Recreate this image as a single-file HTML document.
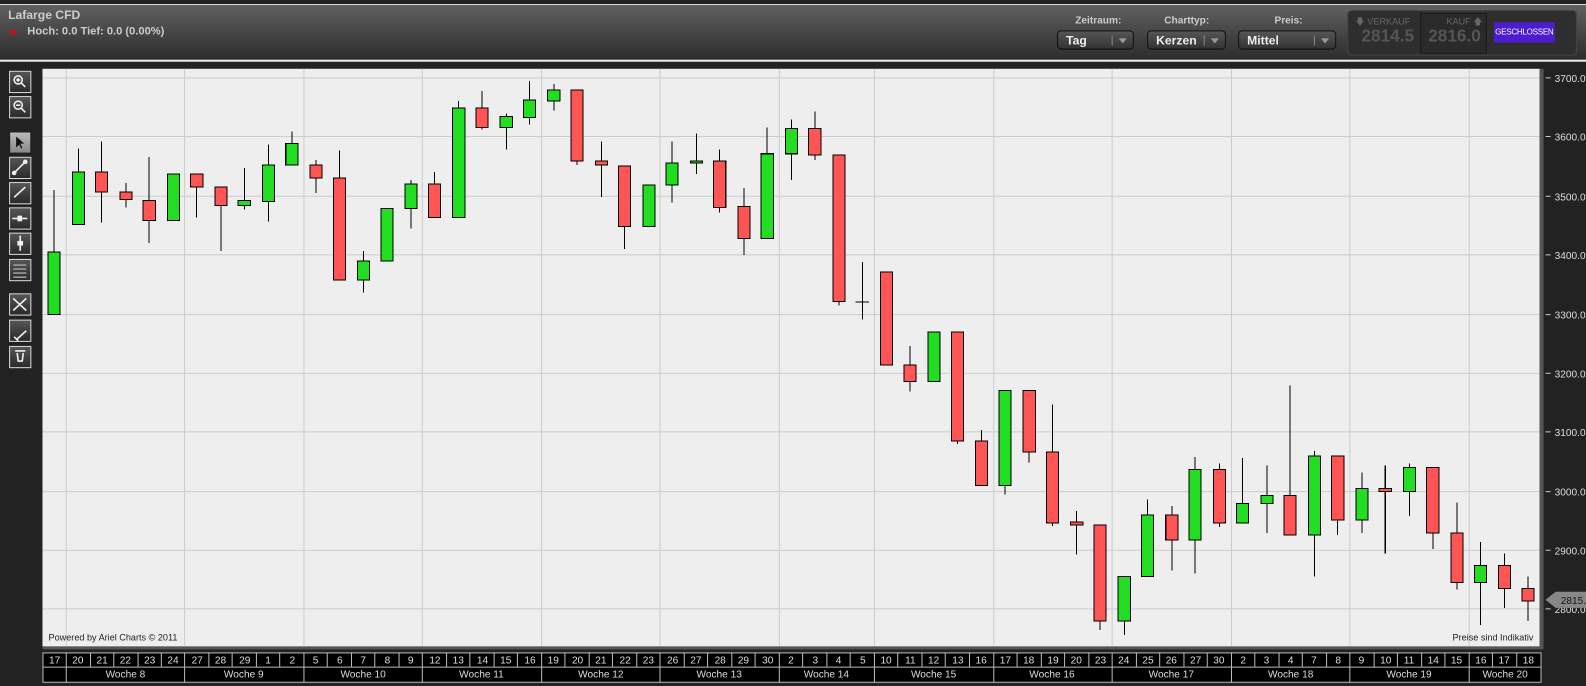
<!DOCTYPE html>
<html><head><meta charset="utf-8"><style>
body{margin:0;width:1586px;height:686px;background:#222;overflow:hidden;font-family:"Liberation Sans",sans-serif;position:relative}
#w{position:absolute;left:0;top:0;width:1568px;height:678px;transform:scale(1.0115);transform-origin:0 0}
.hdr{position:absolute;left:0;top:4px;width:1568px;height:54px;background:linear-gradient(#606060,#2c2c2c);border-top:1px solid #ddd;border-bottom:2px solid #eee}
.t{position:absolute;color:#ccc;font-weight:bold;font-size:12px}
.sel{position:absolute;top:25px;height:19px;border:1px solid #111;border-radius:4px;background:linear-gradient(#555,#333);color:#eee;font-weight:bold;font-size:12px;line-height:18px;padding-left:8px;box-sizing:border-box}
.sel:after{content:"";position:absolute;right:20px;top:4px;height:10px;border-left:1px solid #888}
.sel i{position:absolute;right:6px;top:7px;border-left:4px solid transparent;border-right:4px solid transparent;border-top:5px solid #999}
.btn{position:absolute;left:9px;width:20px;height:20px;border:1px solid #ddd;background:linear-gradient(#555,#2a2a2a)}
</style></head><body><div id="w">
<div class="hdr">
<div class="t" style="left:8px;top:3px">Lafarge CFD</div>
<div style="position:absolute;left:9px;top:25px;border-left:4px solid transparent;border-right:4px solid transparent;border-top:5px solid #e00"></div>
<div class="t" style="left:27px;top:20px;font-size:11px">Hoch: 0.0 Tief: 0.0 (0.00%)</div>
<div class="t" style="left:1063px;top:10px;font-size:10px">Zeitraum:</div>
<div class="t" style="left:1151px;top:10px;font-size:10px">Charttyp:</div>
<div class="t" style="left:1260px;top:10px;font-size:10px">Preis:</div>
<div class="sel" style="left:1045px;width:76px">Tag<i></i></div>
<div class="sel" style="left:1134px;width:78px">Kerzen<i></i></div>
<div class="sel" style="left:1224px;width:97px">Mittel<i></i></div>
<div style="position:absolute;left:1332px;top:5px;width:225px;height:43px;border:1px solid #444;border-radius:4px;background:#2e2e2e"></div>
<div style="position:absolute;left:1404px;top:8px;width:64px;height:38px;border:1px solid #1a1a1a;background:#2a2a2a"></div>
<div style="position:absolute;left:1340px;top:9px;color:#666;font-size:9px">&#x1F847; VERKAUF</div>
<div style="position:absolute;left:1430px;top:9px;color:#666;font-size:9px">KAUF &#x1F845;</div>
<div style="position:absolute;left:1346px;top:21px;color:#555;font-size:17px;font-weight:bold">2814.5</div>
<div style="position:absolute;left:1412px;top:21px;color:#555;font-size:17px;font-weight:bold">2816.0</div>
<div style="position:absolute;left:1477px;top:17px;width:60px;height:20px;background:#4c1dd0;color:#fff;font-size:8px;line-height:20px;text-align:center;letter-spacing:-0.3px;white-space:nowrap;overflow:hidden">GESCHLOSSEN</div>
</div>
<div class="btn" style="top:70px"></div><div class="btn" style="top:95px"></div>
<div class="btn" style="top:130px;background:linear-gradient(#bbb,#888);border-color:#222"></div>
<div class="btn" style="top:155px"></div><div class="btn" style="top:180px"></div><div class="btn" style="top:205px"></div><div class="btn" style="top:230px"></div><div class="btn" style="top:256px"></div>
<div class="btn" style="top:290px"></div><div class="btn" style="top:316px"></div><div class="btn" style="top:342px"></div>
<svg width="1568" height="678" style="position:absolute;left:0;top:0" font-family="Liberation Sans, sans-serif">
<g stroke="#eee" stroke-width="1.6" fill="none">
<circle cx="18" cy="79" r="4"/><line x1="21" y1="82" x2="25" y2="86"/><path d="M16 79h4M18 77v4"/>
<circle cx="18" cy="104" r="4"/><line x1="21" y1="107" x2="25" y2="111"/><path d="M16 104h4"/>
<line x1="14" y1="171" x2="25" y2="160"/><circle cx="14" cy="171" r="1.5" fill="#eee"/><circle cx="25" cy="160" r="1.5" fill="#eee"/>
<line x1="14" y1="195" x2="25" y2="185"/>
<line x1="12" y1="216" x2="27" y2="216"/><rect x="18" y="214" width="3" height="4" fill="#eee"/>
<line x1="20" y1="233" x2="20" y2="248"/><rect x="18" y="239" width="4" height="3" fill="#eee"/>
<path d="M13 262h13M13 266h13M13 270h13M13 274h13" stroke="#999"/>
<path d="M13 307l13-12M13 295l13 12M16 336l10-9M14 333l4 4"/>
<path d="M15 347h10M17 349l1 8h4l1-8"/>
</g>
<path d="M16 135v11l3-3 2 4 1-1-2-4h4z" fill="#111"/>
<rect x="42" y="68" width="1480" height="572" fill="#eee"/>
<rect x="1522" y="68" width="4" height="572" fill="#555"/>
<rect x="42" y="639" width="1484" height="3" fill="#555"/>
<g stroke="#ccc" stroke-width="1">
<path d="M42 77H1522M42 135H1522M42 194H1522M42 252H1522M42 311H1522M42 369H1522M42 427H1522M42 486H1522M42 544H1522M42 602H1522"/>
<path d="M65.5 68V639M182.5 68V639M300.5 68V639M417.5 68V639M535.5 68V639M652.5 68V639M770.5 68V639M864.5 68V639M982.5 68V639M1099.5 68V639M1217.5 68V639M1334.5 68V639M1452.5 68V639"/>
</g>
<g stroke="#ccc"><path d="M1528 77h5M1528 135h5M1528 194h5M1528 252h5M1528 311h5M1528 369h5M1528 427h5M1528 486h5M1528 544h5M1528 602h5"/></g>
<g fill="#ddd" font-size="10">
<text x="1537" y="81">3700.0</text><text x="1537" y="139">3600.0</text><text x="1537" y="198">3500.0</text><text x="1537" y="256">3400.0</text><text x="1537" y="315">3300.0</text><text x="1537" y="373">3200.0</text><text x="1537" y="431">3100.0</text><text x="1537" y="490">3000.0</text><text x="1537" y="548">2900.0</text><text x="1537" y="606">2800.0</text>
</g>
<path d="M1528 593l10-8h30v16h-30z" fill="#888"/><text x="1543" y="597" font-size="10" fill="#111">2815.</text>
<text x="48" y="633" font-size="9" fill="#222">Powered by Ariel Charts © 2011</text>
<text x="1516" y="633" font-size="9" fill="#222" text-anchor="end">Preise sind Indikativ</text>
<g stroke="#000" stroke-width="1" shape-rendering="crispEdges">
<line x1="53.5" y1="188" x2="53.5" y2="311"/><rect x="47.5" y="249" width="12" height="62" fill="#22dd22"/>
<line x1="77.5" y1="147" x2="77.5" y2="222"/><rect x="71.5" y="170" width="12" height="52" fill="#22dd22"/>
<line x1="100.5" y1="140" x2="100.5" y2="220"/><rect x="94.5" y="170" width="12" height="20" fill="#ff5555"/>
<line x1="124.5" y1="181" x2="124.5" y2="205"/><rect x="118.5" y="190" width="12" height="7" fill="#ff5555"/>
<line x1="147.5" y1="155" x2="147.5" y2="240"/><rect x="141.5" y="198" width="12" height="20" fill="#ff5555"/>
<line x1="171.5" y1="172" x2="171.5" y2="218"/><rect x="165.5" y="172" width="12" height="46" fill="#22dd22"/>
<line x1="194.5" y1="172" x2="194.5" y2="215"/><rect x="188.5" y="172" width="12" height="13" fill="#ff5555"/>
<line x1="218.5" y1="185" x2="218.5" y2="248"/><rect x="212.5" y="185" width="12" height="18" fill="#ff5555"/>
<line x1="241.5" y1="166" x2="241.5" y2="207"/><rect x="235.5" y="198" width="12" height="5" fill="#22dd22"/>
<line x1="265.5" y1="143" x2="265.5" y2="219"/><rect x="259.5" y="163" width="12" height="36" fill="#22dd22"/>
<line x1="288.5" y1="130" x2="288.5" y2="163"/><rect x="282.5" y="142" width="12" height="21" fill="#22dd22"/>
<line x1="312.5" y1="158" x2="312.5" y2="191"/><rect x="306.5" y="163" width="12" height="13" fill="#ff5555"/>
<line x1="335.5" y1="149" x2="335.5" y2="277"/><rect x="329.5" y="176" width="12" height="101" fill="#ff5555"/>
<line x1="359.5" y1="248" x2="359.5" y2="289"/><rect x="353.5" y="258" width="12" height="19" fill="#22dd22"/>
<line x1="382.5" y1="206" x2="382.5" y2="258"/><rect x="376.5" y="206" width="12" height="52" fill="#22dd22"/>
<line x1="406.5" y1="178" x2="406.5" y2="226"/><rect x="400.5" y="182" width="12" height="24" fill="#22dd22"/>
<line x1="429.5" y1="170" x2="429.5" y2="215"/><rect x="423.5" y="182" width="12" height="33" fill="#ff5555"/>
<line x1="453.5" y1="100" x2="453.5" y2="215"/><rect x="447.5" y="107" width="12" height="108" fill="#22dd22"/>
<line x1="476.5" y1="90" x2="476.5" y2="128"/><rect x="470.5" y="107" width="12" height="19" fill="#ff5555"/>
<line x1="500.5" y1="112" x2="500.5" y2="148"/><rect x="494.5" y="115" width="12" height="11" fill="#22dd22"/>
<line x1="523.5" y1="80" x2="523.5" y2="123"/><rect x="517.5" y="99" width="12" height="17" fill="#22dd22"/>
<line x1="547.5" y1="83" x2="547.5" y2="109"/><rect x="541.5" y="89" width="12" height="11" fill="#22dd22"/>
<line x1="570.5" y1="89" x2="570.5" y2="163"/><rect x="564.5" y="89" width="12" height="70" fill="#ff5555"/>
<line x1="594.5" y1="140" x2="594.5" y2="195"/><rect x="588.5" y="159" width="12" height="4" fill="#ff5555"/>
<line x1="617.5" y1="164" x2="617.5" y2="246"/><rect x="611.5" y="164" width="12" height="60" fill="#ff5555"/>
<line x1="641.5" y1="183" x2="641.5" y2="224"/><rect x="635.5" y="183" width="12" height="41" fill="#22dd22"/>
<line x1="664.5" y1="140" x2="664.5" y2="200"/><rect x="658.5" y="161" width="12" height="22" fill="#22dd22"/>
<line x1="688.5" y1="132" x2="688.5" y2="172"/><rect x="682.5" y="159" width="12" height="2" fill="#22dd22"/>
<line x1="711.5" y1="148" x2="711.5" y2="210"/><rect x="705.5" y="159" width="12" height="46" fill="#ff5555"/>
<line x1="735.5" y1="186" x2="735.5" y2="252"/><rect x="729.5" y="204" width="12" height="32" fill="#ff5555"/>
<line x1="758.5" y1="126" x2="758.5" y2="236"/><rect x="752.5" y="152" width="12" height="84" fill="#22dd22"/>
<line x1="782.5" y1="118" x2="782.5" y2="178"/><rect x="776.5" y="127" width="12" height="25" fill="#22dd22"/>
<line x1="805.5" y1="110" x2="805.5" y2="158"/><rect x="799.5" y="127" width="12" height="26" fill="#ff5555"/>
<line x1="829.5" y1="153" x2="829.5" y2="302"/><rect x="823.5" y="153" width="12" height="145" fill="#ff5555"/>
<line x1="852.5" y1="259" x2="852.5" y2="316"/><line x1="846" y1="298.5" x2="859" y2="298.5"/>
<line x1="876.5" y1="269" x2="876.5" y2="361"/><rect x="870.5" y="269" width="12" height="92" fill="#ff5555"/>
<line x1="899.5" y1="342" x2="899.5" y2="387"/><rect x="893.5" y="361" width="12" height="16" fill="#ff5555"/>
<line x1="923.5" y1="328" x2="923.5" y2="377"/><rect x="917.5" y="328" width="12" height="49" fill="#22dd22"/>
<line x1="946.5" y1="328" x2="946.5" y2="439"/><rect x="940.5" y="328" width="12" height="108" fill="#ff5555"/>
<line x1="970.5" y1="425" x2="970.5" y2="480"/><rect x="964.5" y="436" width="12" height="44" fill="#ff5555"/>
<line x1="993.5" y1="386" x2="993.5" y2="489"/><rect x="987.5" y="386" width="12" height="94" fill="#22dd22"/>
<line x1="1017.5" y1="386" x2="1017.5" y2="457"/><rect x="1011.5" y="386" width="12" height="61" fill="#ff5555"/>
<line x1="1040.5" y1="400" x2="1040.5" y2="520"/><rect x="1034.5" y="447" width="12" height="70" fill="#ff5555"/>
<line x1="1064.5" y1="505" x2="1064.5" y2="548"/><rect x="1058.5" y="516" width="12" height="3" fill="#ff5555"/>
<line x1="1087.5" y1="519" x2="1087.5" y2="623"/><rect x="1081.5" y="519" width="12" height="95" fill="#ff5555"/>
<line x1="1111.5" y1="570" x2="1111.5" y2="628"/><rect x="1105.5" y="570" width="12" height="44" fill="#22dd22"/>
<line x1="1134.5" y1="494" x2="1134.5" y2="570"/><rect x="1128.5" y="509" width="12" height="61" fill="#22dd22"/>
<line x1="1158.5" y1="500" x2="1158.5" y2="564"/><rect x="1152.5" y="509" width="12" height="25" fill="#ff5555"/>
<line x1="1181.5" y1="452" x2="1181.5" y2="567"/><rect x="1175.5" y="464" width="12" height="70" fill="#22dd22"/>
<line x1="1205.5" y1="458" x2="1205.5" y2="521"/><rect x="1199.5" y="464" width="12" height="53" fill="#ff5555"/>
<line x1="1228.5" y1="453" x2="1228.5" y2="517"/><rect x="1222.5" y="498" width="12" height="19" fill="#22dd22"/>
<line x1="1252.5" y1="460" x2="1252.5" y2="527"/><rect x="1246.5" y="490" width="12" height="8" fill="#22dd22"/>
<line x1="1275.5" y1="381" x2="1275.5" y2="529"/><rect x="1269.5" y="490" width="12" height="39" fill="#ff5555"/>
<line x1="1299.5" y1="446" x2="1299.5" y2="570"/><rect x="1293.5" y="451" width="12" height="78" fill="#22dd22"/>
<line x1="1322.5" y1="451" x2="1322.5" y2="529"/><rect x="1316.5" y="451" width="12" height="63" fill="#ff5555"/>
<line x1="1346.5" y1="467" x2="1346.5" y2="527"/><rect x="1340.5" y="483" width="12" height="31" fill="#22dd22"/>
<line x1="1369.5" y1="460" x2="1369.5" y2="547"/><rect x="1363.5" y="483" width="12" height="3" fill="#ff5555"/>
<line x1="1393.5" y1="458" x2="1393.5" y2="510"/><rect x="1387.5" y="462" width="12" height="24" fill="#22dd22"/>
<line x1="1416.5" y1="462" x2="1416.5" y2="543"/><rect x="1410.5" y="462" width="12" height="65" fill="#ff5555"/>
<line x1="1440.5" y1="497" x2="1440.5" y2="583"/><rect x="1434.5" y="527" width="12" height="49" fill="#ff5555"/>
<line x1="1463.5" y1="536" x2="1463.5" y2="618"/><rect x="1457.5" y="559" width="12" height="17" fill="#22dd22"/>
<line x1="1487.5" y1="547" x2="1487.5" y2="601"/><rect x="1481.5" y="559" width="12" height="23" fill="#ff5555"/>
<line x1="1510.5" y1="570" x2="1510.5" y2="614"/><rect x="1504.5" y="582" width="12" height="12" fill="#ff5555"/>
</g>
<rect x="42.5" y="645.5" width="1481" height="29" fill="#000" stroke="#bbb"/>
<line x1="42" y1="659.5" x2="1524" y2="659.5" stroke="#bbb"/>
<g stroke="#bbb" transform="translate(0,-1)"><path d="M65.5 646V676M89.5 646V660M112.5 646V660M136.5 646V660M159.5 646V660M182.5 646V676M206.5 646V660M229.5 646V660M253.5 646V660M276.5 646V660M300.5 646V676M323.5 646V660M347.5 646V660M370.5 646V660M394.5 646V660M417.5 646V676M441.5 646V660M464.5 646V660M488.5 646V660M511.5 646V660M535.5 646V676M558.5 646V660M582.5 646V660M605.5 646V660M629.5 646V660M652.5 646V676M676.5 646V660M699.5 646V660M723.5 646V660M746.5 646V660M770.5 646V676M793.5 646V660M817.5 646V660M840.5 646V660M864.5 646V676M887.5 646V660M911.5 646V660M934.5 646V660M958.5 646V660M982.5 646V676M1005.5 646V660M1029.5 646V660M1052.5 646V660M1076.5 646V660M1099.5 646V676M1123.5 646V660M1146.5 646V660M1170.5 646V660M1193.5 646V660M1217.5 646V676M1240.5 646V660M1264.5 646V660M1287.5 646V660M1311.5 646V660M1334.5 646V676M1358.5 646V660M1381.5 646V660M1405.5 646V660M1428.5 646V660M1452.5 646V676M1475.5 646V660M1499.5 646V660"/></g>
<g fill="#ddd" font-size="10" text-anchor="middle" transform="translate(0,-1)">
<text x="54" y="657">17</text><text x="77" y="657">20</text><text x="101" y="657">21</text><text x="124" y="657">22</text><text x="148" y="657">23</text><text x="171" y="657">24</text><text x="195" y="657">27</text><text x="218" y="657">28</text><text x="242" y="657">29</text><text x="265" y="657">1</text><text x="289" y="657">2</text><text x="312" y="657">5</text><text x="336" y="657">6</text><text x="359" y="657">7</text><text x="383" y="657">8</text><text x="406" y="657">9</text><text x="430" y="657">12</text><text x="453" y="657">13</text><text x="477" y="657">14</text><text x="500" y="657">15</text><text x="524" y="657">16</text><text x="547" y="657">19</text><text x="571" y="657">20</text><text x="594" y="657">21</text><text x="618" y="657">22</text><text x="641" y="657">23</text><text x="665" y="657">26</text><text x="688" y="657">27</text><text x="712" y="657">28</text><text x="735" y="657">29</text><text x="759" y="657">30</text><text x="782" y="657">2</text><text x="806" y="657">3</text><text x="829" y="657">4</text><text x="853" y="657">5</text><text x="876" y="657">10</text><text x="900" y="657">11</text><text x="923" y="657">12</text><text x="947" y="657">13</text><text x="970" y="657">16</text><text x="994" y="657">17</text><text x="1017" y="657">18</text><text x="1041" y="657">19</text><text x="1064" y="657">20</text><text x="1088" y="657">23</text><text x="1111" y="657">24</text><text x="1135" y="657">25</text><text x="1158" y="657">26</text><text x="1182" y="657">27</text><text x="1205" y="657">30</text><text x="1229" y="657">2</text><text x="1252" y="657">3</text><text x="1276" y="657">4</text><text x="1299" y="657">7</text><text x="1323" y="657">8</text><text x="1346" y="657">9</text><text x="1370" y="657">10</text><text x="1393" y="657">11</text><text x="1417" y="657">14</text><text x="1440" y="657">15</text><text x="1464" y="657">16</text><text x="1487" y="657">17</text><text x="1511" y="657">18</text>
<text x="124" y="671">Woche 8</text><text x="241" y="671">Woche 9</text><text x="359" y="671">Woche 10</text><text x="476" y="671">Woche 11</text><text x="594" y="671">Woche 12</text><text x="711" y="671">Woche 13</text><text x="817" y="671">Woche 14</text><text x="923" y="671">Woche 15</text><text x="1040" y="671">Woche 16</text><text x="1158" y="671">Woche 17</text><text x="1276" y="671">Woche 18</text><text x="1393" y="671">Woche 19</text><text x="1488" y="671">Woche 20</text>
</g>
</svg>
</div></body></html>
